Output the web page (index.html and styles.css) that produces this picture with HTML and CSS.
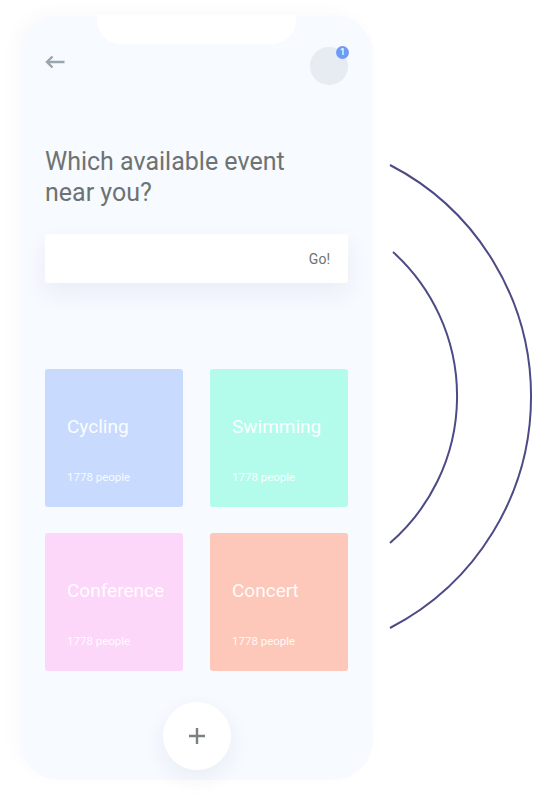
FILE: index.html
```html
<!DOCTYPE html>
<html>
<head>
<meta charset="utf-8">
<link rel="stylesheet" href="styles.css">
</head>
<body>
<div class="stage">
  <div class="phone">
    <div class="notch"></div>
    <div class="header">
      <svg class="back" width="20" height="14" viewBox="0 0 20 14">
        <path d="M19.5 7H2M7.5 1.5L2 7l5.5 5.5" fill="none" stroke="#9aa5ae" stroke-width="2.4"/>
      </svg>
      <div class="avatar"><span class="badge">1</span></div>
    </div>
    <h1 class="title">Which available event<br>near you?</h1>
    <div class="search"><span class="go">Go!</span></div>
    <div class="grid">
      <div class="card cycling"><div class="card-name">Cycling</div><div class="card-count">1778 people</div></div>
      <div class="card swimming"><div class="card-name">Swimming</div><div class="card-count">1778 people</div></div>
      <div class="card conference"><div class="card-name">Conference</div><div class="card-count">1778 people</div></div>
      <div class="card concert"><div class="card-name">Concert</div><div class="card-count">1778 people</div></div>
    </div>
    <div class="fab-row">
      <div class="fab">
        <svg width="18" height="18" viewBox="0 0 18 18"><path d="M9 1v16M1 9h16" stroke="#7b8080" stroke-width="2.4"/></svg>
      </div>
    </div>
  </div>
  <svg class="arcs" width="533" height="798" viewBox="0 0 533 798">
    <path d="M390 165 A260.5 260.5 0 0 1 390 628" fill="none" stroke="#4c4b85" stroke-width="2"/>
    <path d="M393 252 A194.25 194.25 0 0 1 390 543" fill="none" stroke="#4c4b85" stroke-width="2"/>
  </svg>
</div>
</body>
</html>
```

FILE: styles.css
```css
* { box-sizing: border-box; }
html, body { margin: 0; padding: 0; background: #ffffff; }
body { font-family: Roboto, "Liberation Sans", sans-serif; }
.stage { position: relative; width: 533px; height: 798px; overflow: hidden; padding: 15px 0 0 20px; }
.phone {
  position: relative;
  width: 353px;
  height: 765px;
  background: #f7faff;
  border-radius: 40px;
  padding: 32px 25px 0 25px;
  box-shadow: -6px -4px 18px rgba(40, 60, 90, 0.025);
}
.notch {
  position: absolute;
  top: 0;
  left: 77px;
  width: 199px;
  height: 29px;
  background: #ffffff;
  border-radius: 0 0 24px 24px;
}
.header { display: flex; justify-content: space-between; align-items: flex-start; height: 39px; }
.back { margin-top: 8px; display: block; }
.avatar {
  position: relative;
  width: 38px;
  height: 38px;
  border-radius: 50%;
  background: #e6ecf2;
}
.badge {
  position: absolute;
  top: -1px;
  right: -1px;
  width: 13px;
  height: 13px;
  border-radius: 50%;
  background: #6f9bf5;
  color: #fff;
  font-size: 9px;
  line-height: 13px;
  text-align: center;
  font-weight: 500;
}
.title {
  margin: 60px 0 0 0;
  font-size: 25px;
  line-height: 31px;
  font-weight: 400;
  color: #6d7373;
}
.search {
  margin-top: 26px;
  height: 49px;
  background: #ffffff;
  border-radius: 3px;
  box-shadow: 0 10px 24px rgba(40, 60, 110, 0.07);
  display: flex;
  justify-content: flex-end;
  align-items: center;
  padding-right: 18px;
}
.go { font-size: 14px; color: #6d7373; }
.grid {
  margin-top: 86px;
  display: grid;
  grid-template-columns: 138px 138px;
  column-gap: 27px;
  row-gap: 26px;
}
.card {
  height: 138px;
  border-radius: 3px;
  padding: 46px 0 0 22px;
  color: rgba(255, 255, 255, 0.95);
}
.cycling { background: #c9daff; }
.swimming { background: #b3fcec; }
.conference { background: #fdd7f9; }
.concert { background: #fdc8b9; }
.card-name { font-size: 19px; line-height: 24px; }
.card-count { margin-top: 31px; font-size: 11.5px; line-height: 14px; color: rgba(255,255,255,0.9); }
.fab-row { display: flex; justify-content: center; margin-top: 31px; }
.fab {
  width: 68px;
  height: 68px;
  border-radius: 50%;
  background: #ffffff;
  box-shadow: 0 8px 22px rgba(40, 60, 110, 0.07);
  display: flex;
  align-items: center;
  justify-content: center;
}
.arcs { position: absolute; top: 0; left: 0; pointer-events: none; }
```
